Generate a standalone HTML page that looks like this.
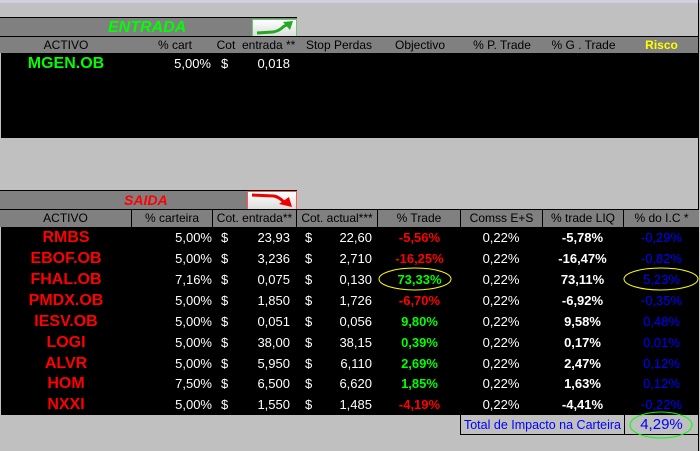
<!DOCTYPE html>
<html><head><meta charset="utf-8"><style>
*{margin:0;padding:0;box-sizing:border-box}
body{width:700px;height:451px;background:#c0c0c0;position:relative;overflow:hidden;font-family:"Liberation Sans",Arial,sans-serif}
.a{position:absolute}
.h{font-size:12px;color:#000;text-align:center;line-height:16px;top:0;height:16px}
.r{position:absolute;left:0;width:699px;height:21px;font-size:13px;line-height:21px;color:#fff;font-weight:bold}
.r div{position:absolute;top:0;white-space:nowrap}
.n{left:0;width:132px;text-align:center;color:#f00;font-size:16px}
.p{right:487px}
.d1{left:221px}.v1{right:409px}
.d2{left:305px}.v2{right:327px}
.t{left:378px;width:83px;text-align:center}
.c{left:461px;width:80px;text-align:center;font-weight:normal}
.l{left:543px;width:79px;text-align:center}
.ic{left:624px;width:75px;text-align:center;color:#00f;font-weight:normal}
.w{font-weight:normal}
.red{color:#f00}.grn{color:#0f0}
</style></head><body>
<div class="a" style="left:0;top:0;width:700px;height:3px;background:#d0d0e0"></div>
<!-- ENTRADA -->
<div class="a" style="left:0;top:17px;width:297px;height:20px;background:#808080;border-top:1px solid #000"></div>
<div class="a" style="left:108px;top:18px;font-size:16px;font-style:italic;font-weight:bold;color:#0f0;line-height:20px">ENTRADA</div>
<div class="a" style="left:252px;top:19px;width:45px;height:18px;background:linear-gradient(#fff,#ddd);border:1px solid #6c6"><svg width="43" height="16"><path d="M4 13 L20 12 Q26 11 30 7 L35 4" stroke="#2a2" stroke-width="3" fill="none"/><path d="M30 2 L40 1 L37 10 Z" fill="#2a2"/></svg></div>
<div class="a" style="left:0;top:36px;width:699px;height:17px;background:#808080;border-top:1px solid #000"></div>
<div class="a" style="left:0;top:37px;width:699px;height:16px">
<div class="a h" style="left:0;width:132px">ACTIVO</div>
<div class="a h" style="left:140px;width:70px">% cart</div>
<div class="a h" style="left:213px;width:86px">Cot&nbsp; entrada **</div>
<div class="a h" style="left:300px;width:78px">Stop Perdas</div>
<div class="a h" style="left:380px;width:80px">Objectivo</div>
<div class="a h" style="left:461px;width:82px">% P. Trade</div>
<div class="a h" style="left:543px;width:81px">% G . Trade</div>
<div class="a h" style="left:624px;width:75px;color:#ff0;font-weight:bold">Risco</div>
</div>
<div class="a" style="left:1px;top:53px;width:698px;height:85px;background:#000"></div>
<div class="r" style="top:53px">
<div style="left:0;width:132px;text-align:center;color:#0f0;font-size:16px">MGEN.OB</div>
<div class="w" style="right:488px">5,00%</div>
<div class="d1 w">$</div>
<div class="w" style="right:409px">0,018</div>
</div>
<div class="a" style="left:698px;top:0;width:1px;height:451px;background:#000"></div>
<!-- SAIDA -->
<div class="a" style="left:0;top:190px;width:297px;height:20px;background:#808080;border-top:1px solid #000"></div>
<div class="a" style="left:124px;top:191px;font-size:14px;font-style:italic;font-weight:bold;color:#f00;line-height:19px">SAIDA</div>
<div class="a" style="left:247px;top:191px;width:50px;height:19px;background:linear-gradient(#fff,#ddd);border:1px solid #f55"><svg width="48" height="17"><path d="M4 3 L26 4 Q31 5 36 10" stroke="#e00" stroke-width="3" fill="none"/><path d="M31 12 L44 15 L41 5 Z" fill="#e00"/></svg></div>
<div class="a" style="left:0;top:209px;width:699px;height:18px;background:#808080;border-top:1px solid #000"></div>
<div class="a" style="left:0;top:210px;width:699px;height:17px">
<div class="a h" style="left:0;width:132px;border-right:1px solid #000;height:17px">ACTIVO</div>
<div class="a h" style="left:132px;width:81px;border-right:1px solid #000;height:17px">% carteira</div>
<div class="a h" style="left:213px;width:84px;border-right:1px solid #000;height:17px">Cot. entrada**</div>
<div class="a h" style="left:297px;width:81px;border-right:1px solid #000;height:17px">Cot. actual***</div>
<div class="a h" style="left:378px;width:83px;border-right:1px solid #000;height:17px">% Trade</div>
<div class="a h" style="left:461px;width:82px;border-right:1px solid #000;height:17px">Comss E+S</div>
<div class="a h" style="left:543px;width:81px;border-right:1px solid #000;height:17px">% trade LIQ</div>
<div class="a h" style="left:624px;width:75px;height:17px">% do I.C *</div>
</div>
<div class="a" style="left:1px;top:227px;width:698px;height:188px;background:#000"></div>
<div class="r" style="top:227px"><div class="n">RMBS</div><div class="p w">5,00%</div><div class="d1 w">$</div><div class="v1 w">23,93</div><div class="d2 w">$</div><div class="v2 w">22,60</div><div class="t red">-5,56%</div><div class="c">0,22%</div><div class="l">-5,78%</div><div class="ic">-0,29%</div></div>
<div class="r" style="top:248px"><div class="n">EBOF.OB</div><div class="p w">5,00%</div><div class="d1 w">$</div><div class="v1 w">3,236</div><div class="d2 w">$</div><div class="v2 w">2,710</div><div class="t red">-16,25%</div><div class="c">0,22%</div><div class="l">-16,47%</div><div class="ic">-0,82%</div></div>
<div class="r" style="top:269px"><div class="n">FHAL.OB</div><div class="p w">7,16%</div><div class="d1 w">$</div><div class="v1 w">0,075</div><div class="d2 w">$</div><div class="v2 w">0,130</div><div class="t grn">73,33%</div><div class="c">0,22%</div><div class="l">73,11%</div><div class="ic">5,23%</div></div>
<div class="r" style="top:290px"><div class="n">PMDX.OB</div><div class="p w">5,00%</div><div class="d1 w">$</div><div class="v1 w">1,850</div><div class="d2 w">$</div><div class="v2 w">1,726</div><div class="t red">-6,70%</div><div class="c">0,22%</div><div class="l">-6,92%</div><div class="ic">-0,35%</div></div>
<div class="r" style="top:311px"><div class="n">IESV.OB</div><div class="p w">5,00%</div><div class="d1 w">$</div><div class="v1 w">0,051</div><div class="d2 w">$</div><div class="v2 w">0,056</div><div class="t grn">9,80%</div><div class="c">0,22%</div><div class="l">9,58%</div><div class="ic">0,48%</div></div>
<div class="r" style="top:332px"><div class="n">LOGI</div><div class="p w">5,00%</div><div class="d1 w">$</div><div class="v1 w">38,00</div><div class="d2 w">$</div><div class="v2 w">38,15</div><div class="t grn">0,39%</div><div class="c">0,22%</div><div class="l">0,17%</div><div class="ic">0,01%</div></div>
<div class="r" style="top:353px"><div class="n">ALVR</div><div class="p w">5,00%</div><div class="d1 w">$</div><div class="v1 w">5,950</div><div class="d2 w">$</div><div class="v2 w">6,110</div><div class="t grn">2,69%</div><div class="c">0,22%</div><div class="l">2,47%</div><div class="ic">0,12%</div></div>
<div class="r" style="top:373px"><div class="n">HOM</div><div class="p w">7,50%</div><div class="d1 w">$</div><div class="v1 w">6,500</div><div class="d2 w">$</div><div class="v2 w">6,620</div><div class="t grn">1,85%</div><div class="c">0,22%</div><div class="l">1,63%</div><div class="ic">0,12%</div></div>
<div class="r" style="top:394px"><div class="n">NXXI</div><div class="p w">5,00%</div><div class="d1 w">$</div><div class="v1 w">1,550</div><div class="d2 w">$</div><div class="v2 w">1,485</div><div class="t red">-4,19%</div><div class="c">0,22%</div><div class="l">-4,41%</div><div class="ic">-0,22%</div></div>
<svg class="a" style="left:0;top:0" width="700" height="451">
<ellipse cx="415" cy="279" rx="36" ry="11" fill="none" stroke="#ff0" stroke-width="1"/>
<ellipse cx="661" cy="279" rx="37" ry="11" fill="none" stroke="#ff0" stroke-width="1"/>
<rect x="460.5" y="414.5" width="238" height="20" fill="none" stroke="#000"/>
<line x1="624.5" y1="414" x2="624.5" y2="435" stroke="#000"/>
<ellipse cx="661" cy="425" rx="31" ry="13" fill="none" stroke="#0f0" stroke-width="1"/>
</svg>
<div class="a" style="left:461px;top:415px;width:163px;line-height:20px;font-size:12.5px;color:#00f;text-align:center;white-space:nowrap">Total de Impacto na Carteira</div>
<div class="a" style="left:624px;top:415px;width:75px;line-height:20px;font-size:15px;color:#00f;text-align:center">4,29%</div>
</body></html>
